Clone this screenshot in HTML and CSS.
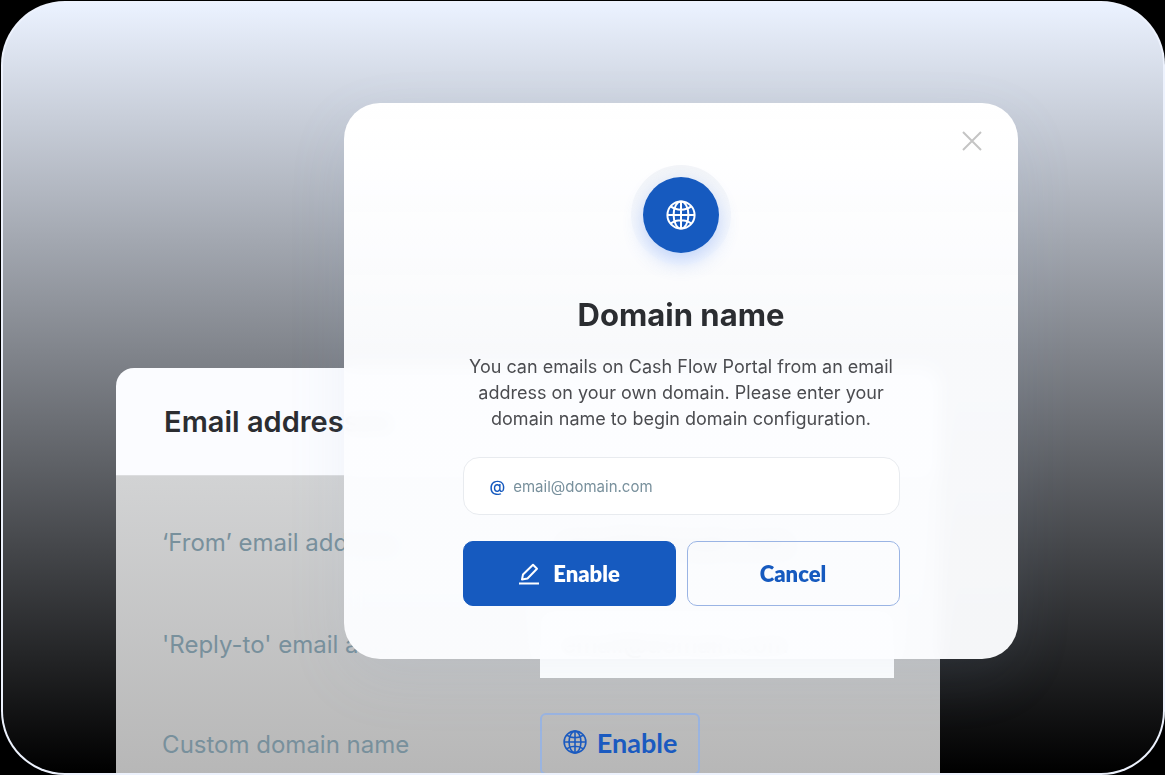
FILE: index.html
```
<!DOCTYPE html>
<html lang="en">
<head>
    <meta charset="UTF-8">
    <meta name="viewport" content="width=device-width, initial-scale=1.0">
    <title>Domain name</title>
    <link rel="stylesheet" href="styles.css">
</head>
<body>
    <svg class="sprite" aria-hidden="true">
        <symbol id="globe" viewBox="0 0 30 30">
            <g fill="none" stroke="currentColor" stroke-width="2">
                <circle cx="15" cy="15" r="13.6"/>
                <ellipse cx="15" cy="15" rx="7.4" ry="13.6"/>
                <path d="M15 1.4v27.2M1.4 15h27.2M4.6 6.4c6 4.4 14.8 4.4 20.8 0M4.6 23.6c6-4.4 14.8-4.4 20.8 0"/>
            </g>
        </symbol>
    </svg>

    <main class="stage">
        <section class="card">
            <header class="card-header">
                <h2>Email addresses</h2>
            </header>
            <div class="card-body">
                <div class="row">
                    <label for="from">‘From’ email address</label>
                    <input type="text" id="from" class="from-input" value="email@domain.com">
                </div>
                <div class="row">
                    <label for="reply-to">'Reply-to' email address</label>
                    <input type="text" id="reply-to" value="email@domain.com">
                </div>
                <div class="row">
                    <span class="row-label">Custom domain name</span>
                    <button type="button" class="enable-small">
                        <svg class="globe-small"><use href="#globe"/></svg>
                        Enable
                    </button>
                </div>
            </div>
        </section>

        <div class="modal" role="dialog" aria-labelledby="modal-title">
            <button type="button" class="close" aria-label="Close">
                <svg viewBox="0 0 20 20"><path d="M1 1l18 18M19 1L1 19"/></svg>
            </button>
            <div class="halo">
                <div class="disc">
                    <svg class="globe"><use href="#globe"/></svg>
                </div>
            </div>
            <h1 id="modal-title">Domain name</h1>
            <p>You can emails on Cash Flow Portal from an email address on your own domain. Please enter your domain name to begin domain configuration.</p>
            <form class="domain-form">
                <div class="field">
                    <label for="domain">@</label>
                    <input type="text" id="domain" placeholder="email@domain.com">
                </div>
                <div class="actions">
                    <button type="button" class="primary">
                        <svg class="pen" viewBox="0 0 22 22">
                            <path d="M1 20.5h20M4 16.5l1-5L15 1.8l4 4L9.500 15.500z"/>
                        </svg>
                        Enable
                    </button>
                    <button type="button" class="secondary">Cancel</button>
                </div>
            </form>
        </div>
    </main>
</body>
</html>
```
FILE: styles.css
```
* {
    box-sizing: border-box;
}
body {
    margin: 0;
    padding: 1px 0 0 1px;
    background-color: #000;
    font-family: Inter, "Open Sans", sans-serif;
}
h1, h2, p {
    margin: 0;
}
button {
    cursor: pointer;
}
.sprite {
    display: none;
}
.stage {
    position: relative;
    height: calc(100vh - 1px);
    padding-top: 365px;
    border: 2px solid transparent;
    border-radius: 64px;
    background: linear-gradient(#ebf2ff, #000) padding-box, linear-gradient(#edf2fd, #edf2fd) border-box;
    overflow: hidden;
}

/* Settings card behind the dialog */
.card {
    width: 71%;
    margin-left: 9.75%;
    border-radius: 18px 18px 0 0;
    overflow: hidden;
}
.card-header {
    padding: 37px 48px 36px;
    background-color: #fbfcff;
}
.card-header h2 {
    font-size: 29px;
    line-height: 34px;
    font-weight: 600;
    color: #2b2d31;
}
.card-body {
    display: flex;
    flex-direction: column;
    gap: 35px;
    padding: 33px 46px 40px;
    border-top: 1px solid #dcdddf;
    background: linear-gradient(#d2d3d4, #b7b7b7 300px);
}
.row {
    display: grid;
    grid-template-columns: 378px 1fr;
    align-items: center;
}
.row label, .row-label {
    font-size: 24px;
    color: #78909c;
}
.row input {
    width: 100%;
    max-width: 355px;
    height: 67px;
    padding: 0 22px;
    border: none;
    background-color: #fff;
    font: 500 24px Inter, sans-serif;
    color: #2b2d31;
}
.row .from-input {
    background-color: transparent;
}
.enable-small {
    display: flex;
    align-items: center;
    justify-content: center;
    gap: 10px;
    width: 160px;
    height: 62px;
    padding: 0 6px 4px;
    border: 2px solid #9ab4e0;
    border-radius: 6px;
    background: none;
    color: #1a5ac0;
    font: 700 27px Lato, sans-serif;
}
.globe-small {
    width: 24px;
    height: 24px;
}

/* Dialog */
.modal {
    position: absolute;
    top: 100px;
    left: 29.4%;
    width: 58.1%;
    display: flex;
    flex-direction: column;
    align-items: center;
    padding: 62px 32px 53px;
    border-radius: 36px;
    background: linear-gradient(#fff, rgba(252, 253, 255, 0.97) 45%);
    backdrop-filter: blur(8px);
    box-shadow: 0 20px 60px rgba(130, 160, 200, 0.1);
}
.close {
    position: absolute;
    top: 22px;
    right: 30px;
    padding: 6px;
    border: none;
    background: none;
}
.close svg {
    display: block;
    width: 20px;
    height: 20px;
    fill: none;
    stroke: #c4c4c4;
    stroke-width: 2;
}
.halo {
    display: flex;
    align-items: center;
    justify-content: center;
    width: 100px;
    height: 100px;
    border-radius: 50%;
    background: linear-gradient(#f3f5f8, #f9fbff);
}
.disc {
    display: flex;
    align-items: center;
    justify-content: center;
    width: 76px;
    height: 76px;
    border-radius: 50%;
    background-color: #165abf;
    color: #fff;
    box-shadow: 0 8px 20px rgba(60, 120, 240, 0.3);
}
.globe {
    width: 30px;
    height: 30px;
}
.modal h1 {
    margin-top: 32px;
    font-size: 31px;
    line-height: 36px;
    font-weight: 700;
    color: #2b2d31;
}
.modal p {
    width: 72%;
    max-width: 440px;
    margin-top: 21px;
    font-size: 18px;
    line-height: 26px;
    text-align: center;
    color: #4b4c50;
}
.domain-form {
    width: 72%;
    max-width: 437px;
    margin-top: 25px;
}
.field {
    display: flex;
    align-items: center;
    gap: 8px;
    height: 58px;
    padding: 0 26px;
    border: 1px solid #e8ebef;
    border-radius: 16px;
    background-color: #fff;
}
.field label {
    font-size: 16px;
    font-weight: 500;
    color: #165abf;
}
.field input {
    flex: 1;
    min-width: 0;
    padding: 0;
    border: none;
    background: none;
    font: 400 15px Inter, sans-serif;
}
.field input::placeholder {
    color: #78909c;
}
.actions {
    display: grid;
    grid-template-columns: 1fr 1fr;
    gap: 11px;
    margin-top: 26px;
}
.actions button {
    display: flex;
    align-items: center;
    justify-content: center;
    gap: 13px;
    height: 65px;
    border: 1px solid #165abf;
    border-radius: 10px;
    font: 800 22px Lato, sans-serif;
}
.actions .primary {
    background-color: #165abf;
    color: #fff;
}
.actions .secondary {
    border-color: #9ab4e4;
    background: none;
    color: #165abf;
}
.pen {
    width: 22px;
    height: 22px;
    fill: none;
    stroke: currentColor;
    stroke-width: 2;
    stroke-linejoin: round;
}
```
